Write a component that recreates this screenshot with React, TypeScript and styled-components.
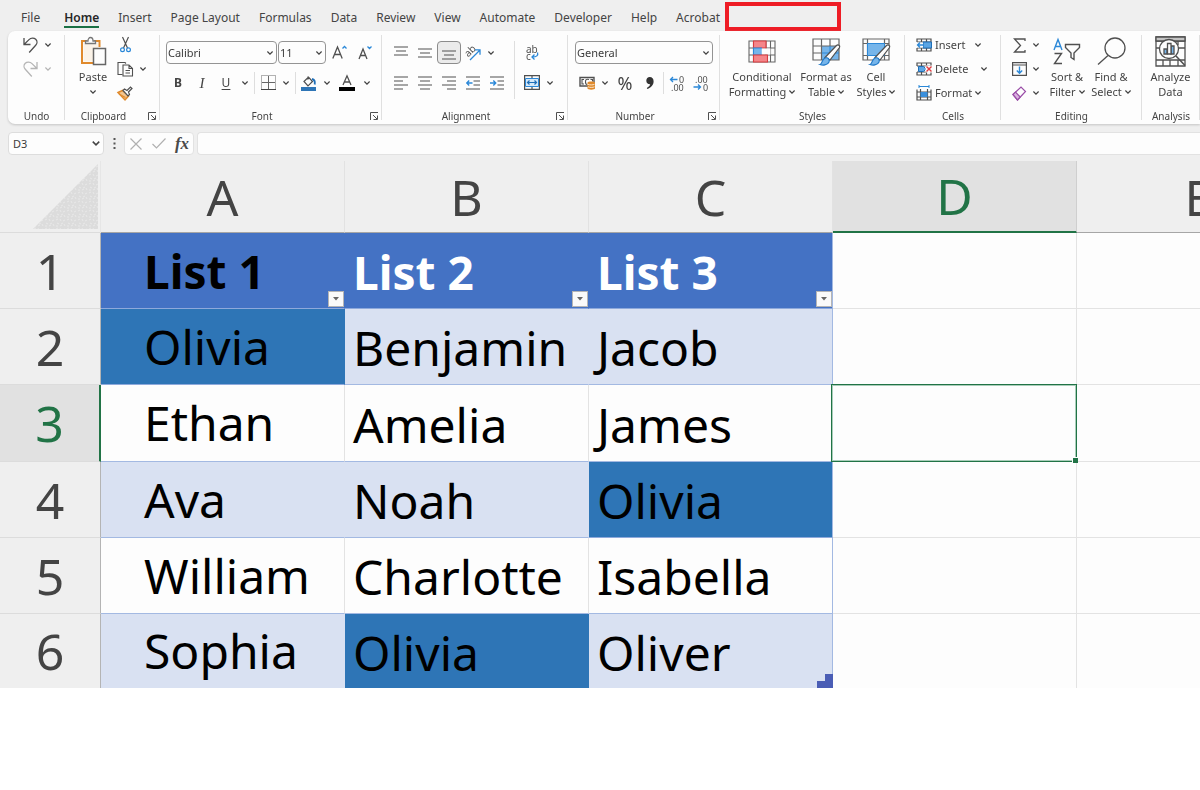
import React from "react";
import styled, { createGlobalStyle, css } from "styled-components";

const GlobalStyle = createGlobalStyle`
  * { box-sizing: border-box; }
  body {
    margin: 0;
    background: #ffffff;
    color: #3b3b3b;
    font-family: "Noto Sans", "Open Sans", sans-serif;
  }
  button, input, select { font: inherit; color: inherit; }
`;

const INK = "#505050";
const BLUE = "#2b88d8";
const GREEN = "#217346";

/* ---------- shell ---------- */

const Workbook = styled.main`
  background: #efefef;
  overflow: hidden;
`;

const TabBar = styled.nav`
  display: flex;
  align-items: center;
  height: 31px;
  padding-left: 12px;
  white-space: nowrap;
`;

const Tab = styled.a<{ $active?: boolean }>`
  display: flex;
  align-items: center;
  height: 22px;
  margin: 3px 10px 0 9px;
  font-size: 12px;
  color: #444444;
  text-decoration: none;
  border-top: 2px solid transparent;
  border-bottom: 2px solid transparent;
  ${(p) =>
    p.$active &&
    css`
      margin-left: 14px;
      font-weight: 600;
      color: #262626;
      border-bottom-color: #1a7044;
    `}
`;

const Highlight = styled.div`
  flex: none;
  width: 116px;
  height: 29px;
  margin-top: 2px;
  margin-left: -5px;
  border: 4px solid #ee1c25;
`;

/* ---------- ribbon ---------- */

const Ribbon = styled.div`
  display: flex;
  margin-left: 8px;
  height: 93px;
  padding: 2px 0;
  overflow: hidden;
  background: #fdfdfd;
  border-radius: 7px 0 0 7px;
`;

const RibbonShade = styled.div`
  margin-bottom: 8px;
  filter: drop-shadow(0 1px 1px #c4c4c4);
`;

const GroupBox = styled.section<{ $w: number }>`
  flex: none;
  display: flex;
  flex-direction: column;
  width: ${(p) => p.$w}px;
  background: linear-gradient(#e0e0e0, #e0e0e0) right 2px / 1px 85px no-repeat;
`;

const GroupBody = styled.div<{ $pad?: number }>`
  display: flex;
  height: 77px;
  padding-left: ${(p) => p.$pad ?? 0}px;
`;

const GroupFoot = styled.div`
  display: flex;
  align-items: center;
  height: 12px;
  padding: 0 4px;
  font-size: 10px;
  line-height: 12px;
  color: #444444;
`;

const GroupLabel = styled.span`
  flex: 1;
  text-align: center;
`;

const Launcher = styled.button`
  display: flex;
  justify-content: flex-end;
  width: 18px;
  padding: 0;
  border: 0;
  background: none;
`;

const TwoRows = styled.div`
  display: flex;
  flex-direction: column;
  gap: 7px;
  padding-top: 8px;
`;

const ThreeRows = styled.div`
  display: flex;
  flex-direction: column;
`;

const Row = styled.div<{ $h: number }>`
  display: flex;
  align-items: center;
  height: ${(p) => p.$h}px;
`;

const Tool = styled.button<{ $w?: number; $pressed?: boolean }>`
  flex: none;
  display: flex;
  align-items: center;
  justify-content: center;
  width: ${(p) => p.$w ?? 24}px;
  height: 23px;
  padding: 0;
  border: 1px solid ${(p) => (p.$pressed ? "#8c8c8c" : "transparent")};
  border-radius: 4px;
  background: ${(p) => (p.$pressed ? "#ebebeb" : "none")};
`;

const Glyph = styled.span<{ $kind: "bold" | "italic" | "underline" | "percent" }>`
  font-size: 12px;
  line-height: 16px;
  color: #444444;
  ${(p) => p.$kind === "bold" && "font-weight: 700;"}
  ${(p) => p.$kind === "italic" && 'font-style: italic; font-family: "Liberation Serif", serif; font-size: 15px;'}
  ${(p) => p.$kind === "underline" && "text-decoration: underline; text-underline-offset: 2px;"}
  ${(p) => p.$kind === "percent" && "font-size: 18px;"}
`;

const Divider = styled.span<{ $h: number; $gap?: number }>`
  flex: none;
  width: 1px;
  height: ${(p) => p.$h}px;
  margin: 0 ${(p) => p.$gap ?? 2}px;
  background: #dedede;
`;

const LabelTool = styled.button<{ $gap?: number }>`
  display: flex;
  align-items: center;
  gap: 3px;
  height: 24px;
  padding: 0;
  border: 0;
  background: none;
  font-size: 11px;
  line-height: 16px;
  color: #444444;
  & > svg:last-child { margin-left: ${(p) => p.$gap ?? 0}px; }
`;

const BigTool = styled.button<{ $w: number }>`
  flex: none;
  display: flex;
  flex-direction: column;
  align-items: center;
  width: ${(p) => p.$w}px;
  height: 70px;
  padding: 0;
  border: 0;
  background: none;
  font-size: 11px;
  line-height: 15px;
  color: #444444;
  white-space: nowrap;
`;

const BigIcon = styled.span`
  display: flex;
  align-items: center;
  justify-content: center;
  height: 36px;
`;

const BigLine = styled.span`
  display: flex;
  align-items: center;
  justify-content: center;
  gap: 3px;
  height: 15px;
`;

const Picker = styled.span<{ $w: number; $soft?: boolean }>`
  flex: none;
  display: grid;
  align-items: center;
  width: ${(p) => p.$w}px;
  height: 23px;
  border: 1px solid ${(p) => (p.$soft ? "#dddddd" : "#949494")};
  border-radius: 4px;
  background: #fdfdfd;
  & > * { grid-area: 1 / 1; }
  & > svg { justify-self: end; margin-right: 3px; pointer-events: none; }
`;

const Select = styled.select<{ $pad?: number }>`
  width: 100%;
  height: 21px;
  padding: 0 0 0 ${(p) => p.$pad ?? 1}px;
  border: 0;
  background: none;
  appearance: none;
  font-size: 11px;
`;

const Svg = styled.svg`
  display: block;
  flex: none;
  overflow: visible;
  fill: none;
`;

/* ---------- formula bar ---------- */

const FormulaBar = styled.div`
  display: flex;
  align-items: center;
  height: 23px;
  margin: 0 0 6px 8px;
`;

const Dots = styled.span`
  flex: none;
  display: flex;
  justify-content: center;
  width: 20px;
`;

const FormulaActions = styled.div`
  flex: none;
  display: flex;
  align-items: center;
  width: 70px;
  height: 23px;
  border: 1px solid #e2e2e2;
  border-radius: 4px;
  background: #fdfdfd;
`;

const FormulaInput = styled.input`
  flex: 1;
  min-width: 0;
  height: 23px;
  margin-left: 3px;
  border: 1px solid #e2e2e2;
  border-right: 0;
  border-radius: 4px 0 0 4px;
  background: #fdfdfd;
`;

const Fx = styled.span`
  font-family: "Liberation Serif", serif;
  font-style: italic;
  font-weight: 700;
  font-size: 17px;
  line-height: 20px;
  color: #4a4a4a;
`;

/* ---------- sheet ---------- */

const SheetScroller = styled.div`
  overflow: hidden;
`;

const Sheet = styled.table`
  table-layout: fixed;
  width: 1321px;
  border-collapse: separate;
  border-spacing: 0;
  color: #000000;
`;

const IndexCol = styled.col`
  width: 101px;
`;

const DataCol = styled.col`
  width: 244px;
`;

const ColHead = styled.th<{ $on?: boolean }>`
  height: 72px;
  padding: 0;
  font-size: 50px;
  line-height: 60px;
  font-weight: 400;
  color: ${(p) => (p.$on ? GREEN : "#444444")};
  background: ${(p) => (p.$on ? "#e1e1e1" : "#efefef")};
  border-right: 1px solid ${(p) => (p.$on ? "#cfcfcf" : "#e2e2e2")};
  border-bottom: ${(p) => (p.$on ? `2px solid ${GREEN}` : "1px solid #a6a6a6")};
`;

const Corner = styled.td`
  height: 72px;
  padding: 0 2px 0 0;
  border-right: 1px solid #e6e6e6;
  border-bottom: 1px solid #dcdcdc;
  & > svg { margin-left: auto; }
`;

const RowHead = styled.th<{ $on?: boolean }>`
  padding: 0;
  font-size: 50px;
  line-height: 60px;
  font-weight: 400;
  color: ${(p) => (p.$on ? GREEN : "#444444")};
  background: ${(p) => (p.$on ? "#e1e1e1" : "#efefef")};
  border-bottom: 1px solid #dcdcdc;
  border-right: ${(p) => (p.$on ? `2px solid ${GREEN}` : "1px solid #b4b4b4")};
`;

const SheetRow = styled.tr<{ $on?: boolean }>`
  height: ${(p) => (p.$on ? 77 : 76)}px;
  &:last-child { height: 74px; }
  &:last-child > * { border-bottom: 0; }
`;

type Tone = "head" | "band" | "plain" | "match" | "empty";

const tones: Record<Tone, ReturnType<typeof css>> = {
  head: css`
    background: #4472c4;
    border-right-color: #4472c4;
    border-bottom-color: #8ea9db;
    font-size: 46px;
    font-weight: 700;
  `,
  band: css`
    background: #d9e1f2;
    border-right-color: #d9e1f2;
    border-bottom-color: #a3b9e2;
  `,
  plain: css`
    border-bottom-color: #a3b9e2;
  `,
  match: css`
    background: #2e75b6;
    border-right-color: #2e75b6;
    border-bottom-color: #8ea9db;
  `,
  empty: css``,
};

const Cell = styled.td<{ $tone: Tone; $indent?: boolean; $white?: boolean; $edge?: boolean }>`
  position: relative;
  padding: ${(p) => (p.$indent ? "0 0 0 43px" : "3px 0 0 8px")};
  font-size: 48px;
  line-height: 60px;
  white-space: nowrap;
  background: #fdfdfd;
  border-right: 1px solid #e3e3e3;
  border-bottom: 1px solid #e3e3e3;
  ${(p) => tones[p.$tone]}
  ${(p) => p.$white && "color: #ffffff;"}
  ${(p) => p.$edge && "border-right-color: #a3b9e2;"}
`;

const FilterButton = styled.button`
  position: absolute;
  right: 0;
  bottom: 1px;
  display: flex;
  align-items: center;
  justify-content: center;
  width: 16px;
  height: 16px;
  padding: 0;
  border: 1px solid #b5b5b5;
  background: #fafafa;
`;

const Selection = styled.div`
  position: absolute;
  inset: -1px -1px -1px -2px;
  z-index: 1;
  border: 1px solid ${GREEN};
  box-shadow: inset 0 0 0 1px #a9cdb9;
  &::after {
    content: "";
    position: absolute;
    right: -2px;
    bottom: -2px;
    width: 5px;
    height: 5px;
    background: ${GREEN};
    border: 1px solid #fdfdfd;
    border-width: 1px 0 0 1px;
  }
`;

const TableHandle = styled.span`
  position: absolute;
  right: -1px;
  bottom: 0;
`;

/* ---------- icons ---------- */

const Chevron = ({ c = "#444444", s = 6 }: { c?: string; s?: number }) => (
  <Svg width={s} height={s / 2 + 1} viewBox="0 0 6 4" stroke={c} strokeWidth="1.2">
    <path d="M.4.5 3 3.1 5.600.5" />
  </Svg>
);

const UndoIcon = ({ c = INK, flip = false }: { c?: string; flip?: boolean }) => (
  <Svg width="15" height="17" viewBox="0 0 15 17" stroke={c} strokeWidth="1.300">
    <g transform={flip ? "matrix(-1 0 0 1 15 0)" : undefined}>
      <path d="M1 1v6.500h6.500M1.300 7.200 6 2.600c2-2 5-2 6.700-.3s1.700 4.300 0 6L6.200 15.500" />
    </g>
  </Svg>
);

const PasteIcon = () => (
  <Svg width="27" height="30" viewBox="0 0 27 30" strokeWidth="1.300">
    <path d="M7 5H2v22h12" stroke="#e08a2c" strokeWidth="2" />
    <path d="M14 5h5.500v6" stroke="#e08a2c" strokeWidth="2" />
    <path d="M3.500 6.500h14.500V12h-5v13.500H3.500z" fill="#fbf3e8" />
    <path d="M5.500 7.500V5H8c0-2 1-3.500 2.500-3.500S13 3 13 5h2.500v2.500z" fill="#fdfdfd" stroke="#777" />
    <path d="M13.500 12.500h12v16h-12z" fill="#fdfdfd" stroke="#666" strokeWidth="1.500" />
  </Svg>
);

const CutIcon = () => (
  <Svg width="11" height="16" viewBox="0 0 11 16" strokeWidth="1.200">
    <path d="M2.500 0 7.500 11M8.500 0l-5 11" stroke={INK} />
    <circle cx="2.500" cy="12.800" r="1.900" stroke={BLUE} />
    <circle cx="8.500" cy="12.800" r="1.900" stroke={BLUE} />
  </Svg>
);

const CopyIcon = () => (
  <Svg width="17" height="16" viewBox="0 0 17 16" stroke={INK} strokeWidth="1.100">
    <path d="M5.500 13.500h-4.500v-12h7l1 1" />
    <path d="M6 4h6l3.500 3.500v7.500H6zM12 4v3.500h3.500M8.500 9.500h4.500M8.500 12h4.500" fill="#fdfdfd" />
  </Svg>
);

const BrushIcon = () => (
  <Svg width="16" height="15" viewBox="0 0 16 15" strokeWidth="1.200">
    <path d="M1 6.500 5.500 4.500 11.500 10 8 14z" fill="#f3c58f" stroke="#e08a2c" strokeWidth="1.500" />
    <path d="m2 8 6.500 3.500" stroke="#e08a2c" />
    <path d="m6 4.500 1.500-1.500 2.500 1.500 3.500-3.500 1.500 1.500L11.500 6l1 2.500-1.500 1.500z" fill="#fdfdfd" stroke={INK} />
  </Svg>
);

const LauncherIcon = () => (
  <Svg width="8" height="8" viewBox="0 0 8 8" stroke={INK} strokeWidth="1">
    <path d="M.5 8V.5H8M3 3l4 4M7.500 3.500v4h-4" />
  </Svg>
);

const FontSizeIcon = ({ down = false }: { down?: boolean }) => (
  <Svg width="15" height="15" viewBox="0 0 15 15" strokeWidth="1.300">
    {down ? (
      <>
        <path d="M1 14 5 4l4 10M2.400 10.500h5.200" stroke={INK} />
        <path d="m9.500 1.500 2 2 2-2" stroke={BLUE} />
      </>
    ) : (
      <>
        <path d="M.8 13.500 5.500 2l4.700 11.500M2.400 9.500h6.200" stroke={INK} />
        <path d="m10.500 3.500 2-2 2 2" stroke={BLUE} />
      </>
    )}
  </Svg>
);

const BordersIcon = () => (
  <Svg width="15" height="15" viewBox="0 0 15 15" stroke="#666">
    <path d="M.5.5h14v14H.5z" strokeDasharray="1 1" />
    <path d="M7.500 1v13M1 7.500h13" />
    <path d="M0 14.500h15" stroke="#444" />
  </Svg>
);

const FillIcon = () => (
  <Svg width="16" height="16" viewBox="0 0 16 16" strokeWidth="1.200">
    <path d="M7 1.500v3M3 6.500 7.500 2l4 4.500-4.500 4.500z" stroke={INK} />
    <path d="M11 4c2.500.5 3.300 2 2.700 5.500" stroke="#1f6fb8" strokeWidth="1.800" />
    <path d="M0 12h15v4H0z" fill="#2e75b6" />
  </Svg>
);

const FontColorIcon = () => (
  <Svg width="16" height="16" viewBox="0 0 16 16" strokeWidth="1.300">
    <path d="M4 10 8 .8 12 10M5.400 7h5.200" stroke={INK} />
    <path d="M0 12h16v4H0z" fill="#000" />
  </Svg>
);

const Lines = ({ rows, h = 14 }: { rows: [number, number, number][]; h?: number }) => (
  <Svg width="14" height={h} viewBox={`0 0 14 ${h}`} stroke={INK} strokeWidth="1.200">
    {rows.map(([x, y, w]) => (
      <path key={y} d={`M${x} ${y}h${w}`} />
    ))}
  </Svg>
);

const IndentIcon = ({ out = false }: { out?: boolean }) => (
  <Svg width="14" height="14" viewBox="0 0 14 14" strokeWidth="1.200">
    <path d="M0 1h14M7.500 5H14M7.500 9H14M0 13h14" stroke={INK} />
    <path d={out ? "M6.500 7H1m2.200-2.400L.8 7l2.400 2.400" : "M0 7h5.500M3.300 4.600 5.700 7 3.300 9.400"} stroke={BLUE} strokeWidth="1.400" />
  </Svg>
);

const SvgText = styled.text`
  font-family: "Noto Sans", sans-serif;
  fill: ${INK};
  stroke: none;
`;

const OrientationIcon = () => (
  <Svg width="16" height="16" viewBox="0 0 16 16">
    <SvgText x="1" y="11" fontSize="10" transform="rotate(-45 4 9)">ab</SvgText>
    <path d="m5 15 9.500-9.500M10 4.800h5v5" stroke={BLUE} strokeWidth="1.300" />
  </Svg>
);

const WrapIcon = () => (
  <Svg width="14" height="16" viewBox="0 0 14 16">
    <SvgText x="1" y="7.500" fontSize="10">ab</SvgText>
    <SvgText x="1" y="15" fontSize="10">c</SvgText>
    <path d="M12.500 7.500c1 3-1 4.500-5 4.500M9.500 9.500 7 12l2.500 2.500" stroke={BLUE} strokeWidth="1.300" />
  </Svg>
);

const MergeIcon = () => (
  <Svg width="16" height="15" viewBox="0 0 16 15">
    <path d="M.6.600h14.800v13.800H.6zM8 .6V4M8 11v3.400" stroke={INK} strokeWidth="1.200" />
    <path d="M1.500 3.500h13v8h-13z" fill="#d5e8f8" stroke={BLUE} />
    <path d="M3.500 7.500h9M5.500 5.500l-2 2 2 2M10.500 5.500l2 2-2 2" stroke="#1f6fb8" strokeWidth="1.200" />
  </Svg>
);

const CurrencyIcon = () => (
  <Svg width="17" height="14" viewBox="0 0 17 14">
    <path d="M1 1.500h14v8.500H1z" stroke={INK} strokeWidth="1.400" />
    <path d="M5 3.500H3v4.500h2M10 3.500C7 2.500 6.500 4 6.500 5.800S7 8.500 8 8.500M11.500 3.500h2v2" stroke={INK} strokeWidth="1.100" />
    <path d="M8.500 6.500c0-1.500 7.500-1.500 7.500 0v6c0 1.500-7.500 1.500-7.500 0z" fill="#e08a2c" />
    <path d="M9 8.300c1.500.8 5 .8 6.500 0M9 10.800c1.500.8 5 .8 6.500 0" stroke="#fbe6cd" />
  </Svg>
);

const CommaIcon = () => (
  <Svg width="8" height="12" viewBox="0 0 8 12">
    <path d="M3.700 0C6.200 0 7.600 1.700 7.600 4.200 7.600 8 5 10.800 1.300 12l-.5-1.100C2.700 10 4 8.800 4.200 7.300 2 7.500.3 6 .3 3.700.3 1.500 1.800 0 3.700 0z" fill="#333" />
  </Svg>
);

const DecimalIcon = ({ less = false }: { less?: boolean }) => (
  <Svg width="16" height="16" viewBox="0 0 16 16" strokeWidth="1.300">
    {less ? (
      <>
        <SvgText x="2" y="7.500" fontSize="9">.00</SvgText>
        <SvgText x="10" y="15.500" fontSize="9">0</SvgText>
        <path d="M.5 12h7M5 9.500 7.500 12 5 14.500" stroke={BLUE} />
      </>
    ) : (
      <>
        <SvgText x="10" y="7.500" fontSize="9">0</SvgText>
        <SvgText x="2" y="15.500" fontSize="9">.00</SvgText>
        <path d="M8.500 4.500h-7M4 2 1.500 4.500 4 7" stroke={BLUE} />
      </>
    )}
  </Svg>
);

const ConditionalIcon = () => (
  <Svg width="28" height="23" viewBox="0 0 28 23" strokeWidth="1.100">
    <path d="M1 1h26v21H1zM5.500 1v21M12 1v21M18 1v21M22.500 1v21M1 8h26M1 15h26" stroke="#666" />
    <path d="M5.500 1H18v7H5.500z" fill="#f4868a" stroke="#d83b3f" />
    <path d="M5.500 8h8v7h-8z" fill="#76b5ea" stroke={BLUE} />
    <path d="M13.500 8.500h9v6h-9z" fill="#fdfdfd" />
    <path d="M5.500 15h14v7h-14z" fill="#f4868a" stroke="#d83b3f" />
  </Svg>
);

const PaintBrush = () => (
  <g>
    <path d="M13 19.500 24.500 7.500c1.500-1.500 4 0 3 2L18 22z" fill="#fdfdfd" stroke={INK} strokeWidth="1.200" />
    <path d="M8 26.500c2.500-.5 1.500-5 5-6.500 3-1 5 1.500 4 4-1.500 3.500-6.500 3.500-9 2.500z" fill="#76b5ea" stroke="#1f78c8" strokeWidth="1.200" />
  </g>
);

const FormatTableIcon = () => (
  <Svg width="29" height="27" viewBox="0 0 29 27">
    <path d="M10 8h17v14H10z" fill="#76b5ea" />
    <path d="M1 1h26v21H1zM1 8h26M1 15h9M9.500 1v21M18 1v7" stroke="#666" strokeWidth="1.200" />
    <path d="M10 15h17M18 8v14" stroke={BLUE} />
    <PaintBrush />
  </Svg>
);

const CellStylesIcon = () => (
  <Svg width="29" height="27" viewBox="0 0 29 27">
    <path d="M1 1h26v21H1zM1 5.500h26M1 17.500h26M5.500 1v21M22.500 1v21" stroke="#666" strokeWidth="1.200" />
    <path d="M5.500 5.500h17v12h-17z" fill="#76b5ea" stroke={BLUE} />
    <PaintBrush />
  </Svg>
);

const InsertIcon = () => (
  <Svg width="16" height="14" viewBox="0 0 16 14">
    <path d="M1 4V1h14v12H1v-3M5.500 1v3M10.500 1v12M5.500 10v3M1 4h14M1 10h14M1 13v-3" stroke={INK} strokeWidth="1.200" />
    <path d="M7 4h8.500v6H7z" fill="#5ba5e4" stroke="#1f6fb8" />
    <path d="M0 4.600h7v5H0z" fill="#fdfdfd" />
    <path d="M8 7H1.500M4 4.500 1.500 7 4 9.500" stroke={BLUE} strokeWidth="1.300" />
  </Svg>
);

const DeleteIcon = () => (
  <Svg width="16" height="14" viewBox="0 0 16 14">
    <path d="M1 4V1h14v3M5.500 1v3M10.500 1v3M5.500 10v3M10.500 10v3M1 10v3h14v-3M1 4h14M1 10h9" stroke={INK} strokeWidth="1.200" />
    <path d="M2.500 4.500h5L10 7l-2.500 2.500h-5z" fill="#5ba5e4" stroke="#1f6fb8" />
    <path d="M9.500 3.500h6.500v7H9.500z" fill="#fdfdfd" />
    <path d="m10.500 4.500 5 5M15.500 4.500l-5 5" stroke="#e03a3e" strokeWidth="1.400" />
  </Svg>
);

const FormatIcon = () => (
  <Svg width="16" height="16" viewBox="0 0 16 16">
    <path d="M1 4.500v10.500h14V4.500M1 7h14M1 12h14M4.500 4v11M11.500 4v11" stroke={INK} strokeWidth="1.200" />
    <path d="M4.500 7h7v5h-7z" fill="#3a8fdc" />
    <path d="M3 1.500h10M3 0v3M13 0v3" stroke={BLUE} />
  </Svg>
);

const SigmaIcon = () => (
  <Svg width="13" height="15" viewBox="0 0 13 15" stroke={INK} strokeWidth="1.300">
    <path d="M12 3V1H1.500L7.500 7.500 1.500 14H12v-2" />
  </Svg>
);

const FillDownIcon = () => (
  <Svg width="15" height="14" viewBox="0 0 15 14">
    <path d="M.6.600h13.800v12.800H.6zM.6 3h13.800" stroke={INK} strokeWidth="1.200" />
    <path d="M7.500 4.500V11M4.800 8.500l2.700 2.700 2.700-2.700" stroke={BLUE} strokeWidth="1.400" />
  </Svg>
);

const EraserIcon = () => (
  <Svg width="15" height="15" viewBox="0 0 15 15" strokeWidth="1.200">
    <path d="M1 8.500 9 1l4.500 4.500-8 8.500z" fill="#fdfdfd" stroke="#9b4fa8" />
    <path d="M1 8.500 3.500 6l4.700 5-2.700 3z" fill="#dcb3e2" stroke="#9b4fa8" />
  </Svg>
);

const SortIcon = () => (
  <Svg width="28" height="27" viewBox="0 0 28 27" strokeWidth="1.400">
    <path d="M1 12 5 1.500 9 12M2.500 8.500h5" stroke={BLUE} />
    <path d="M1.500 15.500H8.500L1.500 25.500H9" stroke={INK} />
    <path d="M12.500 6.500h14v3L21 15v6.500l-3-2V15l-5.500-5.500z" stroke={INK} />
  </Svg>
);

const FindIcon = () => (
  <Svg width="29" height="28" viewBox="0 0 29 28" stroke={INK} strokeWidth="1.300">
    <circle cx="18" cy="11" r="10" />
    <path d="M11 18.500 1 27.500" />
  </Svg>
);

const AnalyzeIcon = () => (
  <Svg width="31" height="31" viewBox="0 0 31 31" strokeWidth="1.300">
    <path d="M1 1h29v29H1zM1 5h29M1 12h29M1 24h29M8 24v6M15 24v6M23 24v6M8 5v4M23 5v4" stroke={INK} />
    <path d="M1 1h29v4H1z" fill="#c4c4c4" stroke={INK} />
    <circle cx="14" cy="13" r="9.500" fill="#fdfdfd" stroke={INK} />
    <path d="M9 13h3v5H9zM16 10h3v8h-3z" fill="#76b5ea" stroke={INK} />
    <path d="M12.500 7.500H16V18h-3.500z" fill="#fdfdfd" stroke={INK} />
    <path d="m21 20 9 9.500" stroke={INK} strokeWidth="1.600" />
  </Svg>
);

/* ---------- composition ---------- */

const More = ({ label, w = 14, c }: { label: string; w?: number; c?: string }) => (
  <Tool $w={w} aria-label={`${label} options`}>
    <Chevron c={c} />
  </Tool>
);

const Group = ({
  label,
  w,
  pad,
  launcher,
  children,
}: {
  label: string;
  w: number;
  pad?: number;
  launcher?: boolean;
  children: React.ReactNode;
}) => (
  <GroupBox $w={w} aria-label={label}>
    <GroupBody $pad={pad}>{children}</GroupBody>
    <GroupFoot>
      <GroupLabel>{label}</GroupLabel>
      {launcher && (
        <Launcher aria-label={`${label} settings`}>
          <LauncherIcon />
        </Launcher>
      )}
    </GroupFoot>
  </GroupBox>
);

const Big = ({
  w,
  icon,
  lines,
  menu = true,
}: {
  w: number;
  icon: React.ReactNode;
  lines: [string, string];
  menu?: boolean;
}) => (
  <BigTool $w={w}>
    <BigIcon>{icon}</BigIcon>
    <BigLine>{lines[0]}</BigLine>
    <BigLine>
      {lines[1]}
      {menu && <Chevron />}
    </BigLine>
  </BigTool>
);

const tabs = [
  "File", "Home", "Insert", "Page Layout", "Formulas", "Data", "Review",
  "View", "Automate", "Developer", "Help", "Acrobat",
];

const rows: { cells: [string, Tone][] }[] = [
  { cells: [["List 1", "head"], ["List 2", "head"], ["List 3", "head"]] },
  { cells: [["Olivia", "match"], ["Benjamin", "band"], ["Jacob", "band"]] },
  { cells: [["Ethan", "plain"], ["Amelia", "plain"], ["James", "plain"]] },
  { cells: [["Ava", "band"], ["Noah", "band"], ["Olivia", "match"]] },
  { cells: [["William", "plain"], ["Charlotte", "plain"], ["Isabella", "plain"]] },
  { cells: [["Sophia", "band"], ["Olivia", "match"], ["Oliver", "band"]] },
];

export default function App() {
  return (
    <>
      <GlobalStyle />
      <Workbook>
        <TabBar>
          {tabs.map((t) => (
            <Tab key={t} href="#" $active={t === "Home"}>
              {t}
            </Tab>
          ))}
          <Highlight />
        </TabBar>

        <RibbonShade>
          <Ribbon>
            <Group label="Undo" w={57} pad={12}>
              <ThreeRows>
                <Row $h={24}>
                  <Tool $w={21} aria-label="Undo"><UndoIcon /></Tool>
                  <More label="Undo" />
                </Row>
                <Row $h={24}>
                  <Tool $w={21} aria-label="Redo"><UndoIcon c="#b5b5b5" flip /></Tool>
                  <More label="Redo" c="#b5b5b5" />
                </Row>
              </ThreeRows>
            </Group>

            <Group label="Clipboard" w={95} pad={10} launcher>
              <BigTool $w={36}>
                <BigIcon><PasteIcon /></BigIcon>
                <BigLine>Paste</BigLine>
                <BigLine><Chevron /></BigLine>
              </BigTool>
              <ThreeRows>
                <Row $h={24}><Tool $w={28} aria-label="Cut"><CutIcon /></Tool></Row>
                <Row $h={24}>
                  <Tool $w={28} aria-label="Copy"><CopyIcon /></Tool>
                  <More label="Copy" w={8} />
                </Row>
                <Row $h={24}><Tool $w={28} aria-label="Format Painter"><BrushIcon /></Tool></Row>
              </ThreeRows>
            </Group>

            <Group label="Font" w={222} pad={6} launcher>
              <TwoRows>
                <Row $h={23}>
                  <Picker $w={111}>
                    <Select aria-label="Font name"><option>Calibri</option></Select>
                    <Chevron />
                  </Picker>
                  <Divider $h={0} $gap={0} />
                  <Picker $w={48}>
                    <Select aria-label="Font size"><option>11</option></Select>
                    <Chevron />
                  </Picker>
                  <Tool $w={26} aria-label="Increase font size"><FontSizeIcon /></Tool>
                  <Tool $w={26} aria-label="Decrease font size"><FontSizeIcon down /></Tool>
                </Row>
                <Row $h={23}>
                  <Tool><Glyph $kind="bold">B</Glyph></Tool>
                  <Tool><Glyph $kind="italic">I</Glyph></Tool>
                  <Tool><Glyph $kind="underline">U</Glyph></Tool>
                  <More label="Underline" />
                  <Divider $h={22} />
                  <Tool $w={22} aria-label="Borders"><BordersIcon /></Tool>
                  <More label="Borders" />
                  <Divider $h={22} />
                  <Tool $w={22} aria-label="Fill color"><FillIcon /></Tool>
                  <More label="Fill color" />
                  <Tool $w={26} aria-label="Font color"><FontColorIcon /></Tool>
                  <More label="Font color" />
                </Row>
              </TwoRows>
            </Group>

            <Group label="Alignment" w={186} pad={7} launcher>
              <TwoRows>
                <Row $h={23}>
                  <Tool aria-label="Top align"><Lines h={18} rows={[[0, 3, 14], [2, 7, 10], [0, 11, 14]]} /></Tool>
                  <Tool aria-label="Middle align"><Lines rows={[[0, 3, 14], [2, 7, 10], [0, 11, 14]]} /></Tool>
                  <Tool $pressed aria-label="Bottom align"><Lines h={10} rows={[[0, 3, 14], [2, 7, 10], [0, 11, 14]]} /></Tool>
                  <Tool aria-label="Orientation"><OrientationIcon /></Tool>
                  <More label="Orientation" w={12} />
                </Row>
                <Row $h={23}>
                  <Tool aria-label="Align left"><Lines rows={[[0, 1, 14], [0, 5, 9], [0, 9, 14], [0, 13, 9]]} /></Tool>
                  <Tool aria-label="Center"><Lines rows={[[0, 1, 14], [2, 5, 10], [0, 9, 14], [2, 13, 10]]} /></Tool>
                  <Tool aria-label="Align right"><Lines rows={[[0, 1, 14], [5, 5, 9], [0, 9, 14], [5, 13, 9]]} /></Tool>
                  <Tool aria-label="Decrease indent"><IndentIcon out /></Tool>
                  <Tool aria-label="Increase indent"><IndentIcon /></Tool>
                </Row>
              </TwoRows>
              <TwoRows><Divider $h={58} $gap={5} /></TwoRows>
              <TwoRows>
                <Row $h={23}><Tool aria-label="Wrap text"><WrapIcon /></Tool></Row>
                <Row $h={23}>
                  <Tool aria-label="Merge"><MergeIcon /></Tool>
                  <More label="Merge" w={12} />
                </Row>
              </TwoRows>
            </Group>

            <Group label="Number" w={152} pad={7} launcher>
              <TwoRows>
                <Row $h={23}>
                  <Picker $w={138}>
                    <Select aria-label="Number format"><option>General</option></Select>
                    <Chevron />
                  </Picker>
                </Row>
                <Row $h={23}>
                  <Tool aria-label="Accounting format"><CurrencyIcon /></Tool>
                  <More label="Accounting format" w={12} />
                  <Tool $w={28}><Glyph $kind="percent">%</Glyph></Tool>
                  <Tool $w={22} aria-label="Comma style"><CommaIcon /></Tool>
                  <Divider $h={22} />
                  <Tool $w={22} aria-label="Increase decimal"><DecimalIcon /></Tool>
                  <Tool $w={26} aria-label="Decrease decimal"><DecimalIcon less /></Tool>
                </Row>
              </TwoRows>
            </Group>

            <Group label="Styles" w={185} pad={6}>
              <Big w={72} icon={<ConditionalIcon />} lines={["Conditional", "Formatting"]} />
              <Big w={56} icon={<FormatTableIcon />} lines={["Format as", "Table"]} />
              <Big w={44} icon={<CellStylesIcon />} lines={["Cell", "Styles"]} />
            </Group>

            <Group label="Cells" w={96} pad={11}>
              <ThreeRows>
                <LabelTool $gap={6}><InsertIcon />Insert<Chevron /></LabelTool>
                <LabelTool $gap={10}><DeleteIcon />Delete<Chevron /></LabelTool>
                <LabelTool><FormatIcon />Format<Chevron /></LabelTool>
              </ThreeRows>
            </Group>

            <Group label="Editing" w={141} pad={6}>
              <ThreeRows>
                <Row $h={24}>
                  <Tool aria-label="AutoSum"><SigmaIcon /></Tool>
                  <More label="AutoSum" w={10} />
                </Row>
                <Row $h={24}>
                  <Tool aria-label="Fill"><FillDownIcon /></Tool>
                  <More label="Fill" w={10} />
                </Row>
                <Row $h={24}>
                  <Tool aria-label="Clear"><EraserIcon /></Tool>
                  <More label="Clear" w={10} />
                </Row>
              </ThreeRows>
              <Divider $h={0} />
              <Big w={42} icon={<SortIcon />} lines={["Sort &", "Filter"]} />
              <Big w={46} icon={<FindIcon />} lines={["Find &", "Select"]} />
            </Group>

            <Group label="Analysis" w={58}>
              <Big w={57} icon={<AnalyzeIcon />} lines={["Analyze", "Data"]} menu={false} />
            </Group>
          </Ribbon>
        </RibbonShade>

        <FormulaBar>
          <Picker $w={96} $soft>
            <Select aria-label="Name box" $pad={4}><option>D3</option></Select>
            <Chevron s={8} />
          </Picker>
          <Dots>
            <Svg width="3" height="12" viewBox="0 0 3 12">
              <path d="M.5 0h2v2h-2zM.5 4.500h2v2h-2zM.5 9h2v2h-2z" fill="#555" />
            </Svg>
          </Dots>
          <FormulaActions>
            <Tool $w={22} aria-label="Cancel">
              <Svg width="12" height="12" viewBox="0 0 12 12" stroke="#b0b0b0" strokeWidth="1.200">
                <path d="m.5.5 11 11M11.500.5l-11 11" />
              </Svg>
            </Tool>
            <Tool aria-label="Enter">
              <Svg width="14" height="11" viewBox="0 0 14 11" stroke="#b0b0b0" strokeWidth="1.200">
                <path d="m.5 6 4 4 9-9.500" />
              </Svg>
            </Tool>
            <Tool $w={22}><Fx>fx</Fx></Tool>
          </FormulaActions>
          <FormulaInput aria-label="Formula" />
        </FormulaBar>

        <SheetScroller>
          <Sheet>
            <colgroup>
              <IndexCol />
              <DataCol /><DataCol /><DataCol /><DataCol /><DataCol />
            </colgroup>
            <thead>
              <tr>
                <Corner>
                  <Svg width="65" height="65" viewBox="0 0 65 65">
                    <defs>
                      <pattern id="grain" width="11" height="9" patternUnits="userSpaceOnUse">
                        <path d="M0 0h11v9H0z" fill="#dcdcdc" />
                        <path d="M1 2l2-1M5 1l1 2M8 3l2-1M2 5l2 1M6 6l2-1M9 6l1 2M1 8h2M5 8l2-1" stroke="#e8e8e8" />
                      </pattern>
                    </defs>
                    <path d="M65 0v65H0z" fill="url(#grain)" />
                  </Svg>
                </Corner>
                {["A", "B", "C", "D", "E"].map((c) => (
                  <ColHead key={c} scope="col" $on={c === "D"}>{c}</ColHead>
                ))}
              </tr>
            </thead>
            <tbody>
              {rows.map((row, r) => (
                <SheetRow key={r} $on={r === 2}>
                  <RowHead scope="row" $on={r === 2}>{r + 1}</RowHead>
                  {row.cells.map(([text, tone], c) => (
                    <Cell
                      key={c}
                      $tone={tone}
                      $indent={c === 0}
                      $white={r === 0 && c > 0}
                      $edge={c === 2}
                    >
                      {text}
                      {r === 0 && (
                        <FilterButton aria-label={`Filter ${text}`}>
                          <Svg width="6" height="4" viewBox="0 0 6 4">
                            <path d="M0 0h6L3 3.500z" fill="#666" />
                          </Svg>
                        </FilterButton>
                      )}
                      {r === 5 && c === 2 && (
                        <TableHandle>
                          <Svg width="16" height="14" viewBox="0 0 16 14">
                            <path d="M8 0h8v14H0V7h8z" fill="#4a5db5" />
                          </Svg>
                        </TableHandle>
                      )}
                    </Cell>
                  ))}
                  <Cell $tone="empty">{r === 2 && <Selection />}</Cell>
                  <Cell $tone="empty" />
                </SheetRow>
              ))}
            </tbody>
          </Sheet>
        </SheetScroller>
      </Workbook>
    </>
  );
}
